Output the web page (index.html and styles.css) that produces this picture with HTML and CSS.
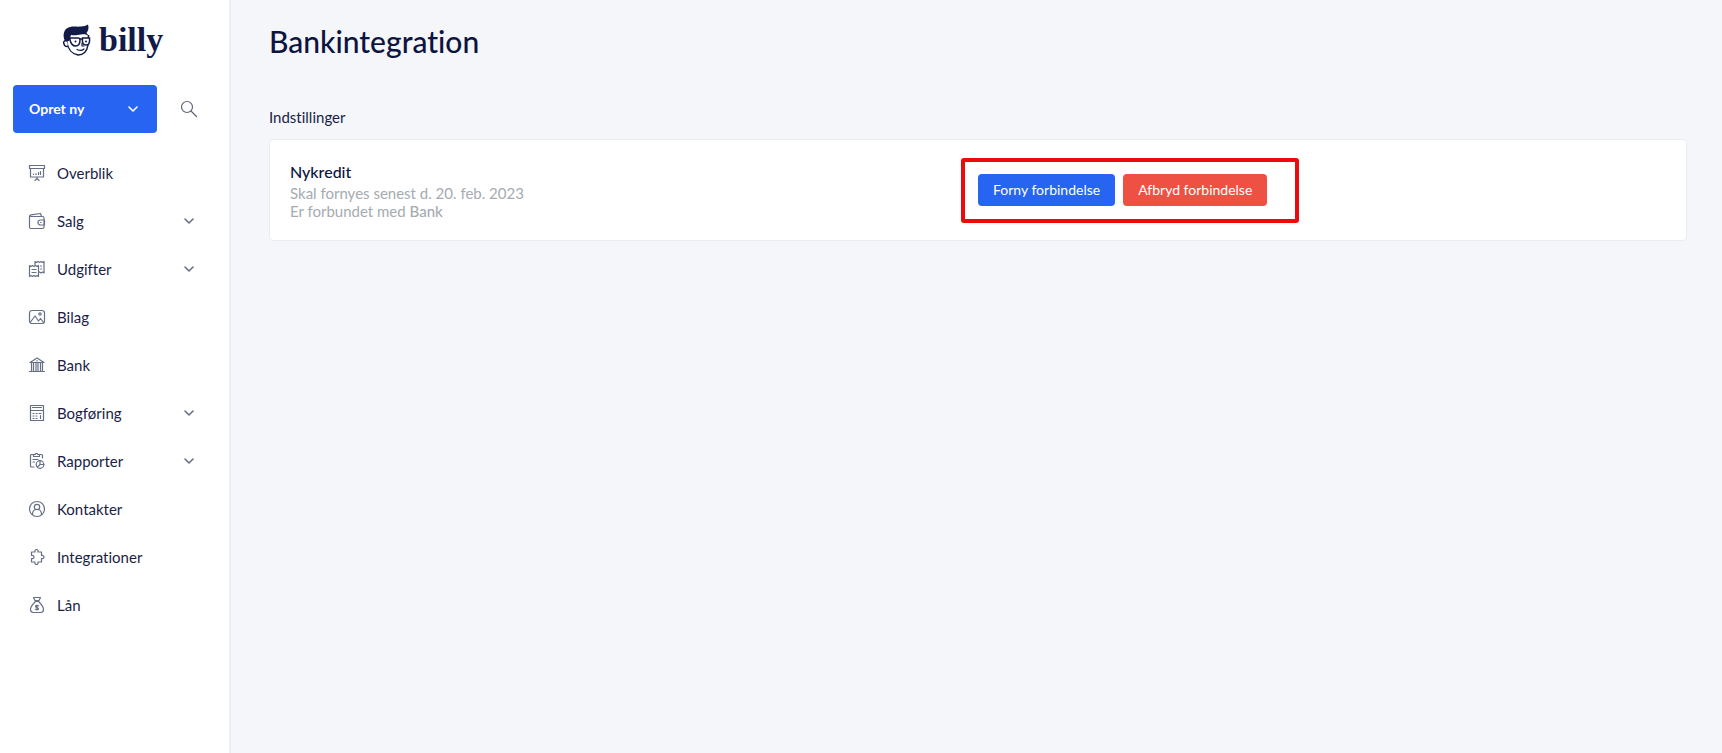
FILE: index.html
```html
<!DOCTYPE html>
<html lang="da">
<head>
<meta charset="utf-8">
<meta name="viewport" content="width=device-width, initial-scale=1">
<title>Bankintegration</title>
<link rel="stylesheet" href="styles.css">
</head>
<body>
<div class="app">
  <aside class="sidebar">
    <a class="logo" href="#" aria-label="billy">
      <svg class="logo-face" viewBox="0 0 30 34" aria-hidden="true">
        <path d="M5 15v5c1 6 5 11 11 12 6 0 9-4 10-10l.5-10" fill="#fff" stroke="currentColor" stroke-width="1.5"/>
        <path d="M5 18c-3-1-4 1-3 3 .5 2 2 3 4 2" fill="#fff" stroke="currentColor" stroke-width="1.5"/>
        <path d="M3 18C0 12 2 5 8 4c4-1 7 0 11-.5 3 0 5-1 7-2 1 3 .5 6-1.500 8.500L27 13c-3-2-5-2-8-1.500-4 .5-6 1-10 .5L7 18z" fill="currentColor"/>
        <path d="M8 15h8c1 0 2 1 2 2 0 4-1 6-4.500 6S9 21 8 17zM20.500 15h7c.5 5-.5 7-3.500 7s-4-2-3.500-7zM18 16h2.500M3 16h5" fill="#fff" stroke="currentColor" stroke-width="1.500"/>
        <circle cx="13.500" cy="18.500" r="1" fill="currentColor"/>
        <circle cx="24" cy="18.500" r="1" fill="currentColor"/>
        <path d="M20 20v3h2M15 26.500c3 1.500 5 1.500 7-.5" fill="none" stroke="currentColor" stroke-width="1.200" stroke-linecap="round"/>
      </svg>
      <span class="logo-name">billy</span>
    </a>
    <div class="tools">
      <button class="create" type="button">Opret ny
        <svg class="chevron" viewBox="0 0 12 12" aria-hidden="true"><path d="M2 4l4 4 4-4"/></svg>
      </button>
      <button class="search" type="button" aria-label="Søg">
        <svg class="icon" viewBox="0 0 18 18" aria-hidden="true"><circle cx="7" cy="7" r="5.500"/><path d="M11 11l5.500 5.500"/></svg>
      </button>
    </div>
    <nav class="nav">
      <a class="item" href="#">
        <svg class="icon" viewBox="0 0 18 18" aria-hidden="true"><path d="M1.500 1.500h15v3h-15zM2.500 4.500v8.500h13V4.500M9 13v2M7 16.500L9 14.500l2 2M5.500 10.500v-.5M8 10.500v-1M10.500 10.500v-2M12.500 10.500V7.500"/></svg>
        <span class="label">Overblik</span>
      </a>
      <a class="item" href="#">
        <svg class="icon" viewBox="0 0 18 18" aria-hidden="true"><path d="M1.500 4.500V15c0 .8.700 1.500 1.500 1.500h11.500c.8 0 1.500-.7 1.500-1.500V6c0-.8-.7-1.500-1.500-1.500zM1.500 4.500c0-1 .5-1.500 1.500-1.700L12.500 1.500l1 3M16.500 8h-4a2.500 2.500 0 0 0 0 5h4zM12.500 10.500h.5"/></svg>
        <span class="label">Salg</span>
        <svg class="chevron" viewBox="0 0 12 12" aria-hidden="true"><path d="M2 4l4 4 4-4"/></svg>
      </a>
      <a class="item" href="#">
        <svg class="icon" viewBox="0 0 18 18" aria-hidden="true"><path d="M1.500 5.500l1.500 1 1.500-1 1.500 1 1.500-1 1.500 1 1.500-1v11l-1.500-1-1.500 1-1.500-1-1.500 1-1.500-1-1.500 1zM4 9.500h4M4 12.500h4M7 5V1.500l1.500 1 1.500-1 1.500 1 1.500-1 1.500 1 1.500-1v11.500l-1.500-1-1.500 1-1.500-1M12.500 6h1M12.500 9h1"/></svg>
        <span class="label">Udgifter</span>
        <svg class="chevron" viewBox="0 0 12 12" aria-hidden="true"><path d="M2 4l4 4 4-4"/></svg>
      </a>
      <a class="item" href="#">
        <svg class="icon" viewBox="0 0 18 18" aria-hidden="true"><rect x="1.500" y="2.500" width="15" height="13" rx="2.500"/><path d="M2.500 14l4.500-6 3.500 5 2-2.500 3 4"/><circle cx="12" cy="6" r="1.200"/></svg>
        <span class="label">Bilag</span>
      </a>
      <a class="item" href="#">
        <svg class="icon" viewBox="0 0 18 18" aria-hidden="true"><path d="M2 6.500L9 2l7 4.500zM1.500 15.500h15M3.500 7v8M5.500 7v8M8 7v8M10 7v8M12.500 7v8M14.500 7v8M9 4.500v.5"/></svg>
        <span class="label">Bank</span>
      </a>
      <a class="item" href="#">
        <svg class="icon" viewBox="0 0 18 18" aria-hidden="true"><path d="M2.500 1.500h13v15h-13zM2.500 6.500h13M4.500 3.500h9M5 9.500h1M8 9.500h1M11 9.500h2M5 12h1M8 12h1M5 14.500h1M8 14.500h1M12.500 11.500v3"/></svg>
        <span class="label">Bogføring</span>
        <svg class="chevron" viewBox="0 0 12 12" aria-hidden="true"><path d="M2 4l4 4 4-4"/></svg>
      </a>
      <a class="item" href="#">
        <svg class="icon" viewBox="0 0 18 18" aria-hidden="true"><path d="M5.500 2.500h-2c-.6 0-1 .4-1 1V14c0 .6.400 1 1 1H6M11.500 2.500h2c.6 0 1 .4 1 1V6M5.500 4.500v-2h1.500l1-1h1l1 1h1.500v2zM5 7.500h5M5 10h1.500"/><circle cx="12" cy="12.500" r="3.800"/><path d="M12 8.700v3.800h3.800M12 12.500l-2.500 2.500"/></svg>
        <span class="label">Rapporter</span>
        <svg class="chevron" viewBox="0 0 12 12" aria-hidden="true"><path d="M2 4l4 4 4-4"/></svg>
      </a>
      <a class="item" href="#">
        <svg class="icon" viewBox="0 0 18 18" aria-hidden="true"><circle cx="9" cy="9" r="7.500"/><circle cx="9" cy="7" r="2.700"/><path d="M4.500 14.500c0-3 1.500-4.500 3-5M13.500 14.500c0-3-1.500-4.500-3-5"/></svg>
        <span class="label">Kontakter</span>
      </a>
      <a class="item" href="#">
        <svg class="icon" viewBox="0 0 18 18" aria-hidden="true"><path d="M3.500 4H7c-.5-1.500.5-2.500 1.500-2.500S10.500 2.500 10 4h3.500v3.500c1.500-.5 2.500.5 2.500 1.500s-1 2-2.500 1.500V14H10c.5 1.500-.5 2.500-1.500 2.500S6.500 15.500 7 14H3.500v-3.500c2 .5 2.500-.5 2.500-1.500S5 7 3.500 7.500z"/></svg>
        <span class="label">Integrationer</span>
      </a>
      <a class="item" href="#">
        <svg class="icon" viewBox="0 0 18 18" aria-hidden="true"><path d="M5.500 1.500h7l-1.500 3H7zM7 5.500h4M7 6C5 8 2.500 11 2.500 13.500c0 2 1 3 3 3h7c2 0 3-1 3-3C15.500 11 13 8 11 6M10.500 9.800c-1-1-3-.5-3 .6 0 1.500 3 .8 3 2.300 0 1.200-2 1.500-3 .4M9 9v5"/></svg>
        <span class="label">Lån</span>
      </a>
    </nav>
  </aside>
  <main class="main">
    <h1 class="title">Bankintegration</h1>
    <h2 class="section">Indstillinger</h2>
    <section class="card">
      <div class="bank">
        <h3 class="bank-name">Nykredit</h3>
        <p class="meta">Skal fornyes senest d. 20. feb. 2023</p>
        <p class="meta">Er forbundet med <b>Bank</b></p>
      </div>
      <div class="actions">
        <button class="button renew" type="button">Forny forbindelse</button>
        <button class="button cancel" type="button">Afbryd forbindelse</button>
        <div class="highlight"></div>
      </div>
    </section>
  </main>
</div>
</body>
</html>
```
FILE: styles.css
```css
* { box-sizing: border-box; }

body {
  margin: 0;
  font-family: Lato, "Open Sans", sans-serif;
  font-size: 15px;
  line-height: 18px;
  font-variant-ligatures: none;
  color: #1b1e45;
  background: #f4f6fa;
}

h1, h2, h3, p { margin: 0; font-weight: 400; }
button { font: inherit; border: 0; cursor: pointer; }
a { color: inherit; text-decoration: none; }

.app { display: flex; min-height: 100vh; }

.sidebar {
  flex: 0 0 231px;
  padding: 20px 13px 0;
  background: #fff;
  border-right: 2px solid #edeff5;
}

.logo {
  display: flex;
  align-items: center;
  gap: 7px;
  height: 40px;
  padding-left: 49px;
  color: #111a48;
}
.logo-face { width: 30px; height: 34px; }
.logo-name {
  font: 700 34px/40px "Liberation Serif", serif;
}

.tools { display: flex; align-items: center; gap: 16px; margin-top: 25px; }
.create {
  display: flex;
  align-items: center;
  justify-content: space-between;
  width: 144px;
  height: 48px;
  padding: 0 18px 0 16px;
  border-radius: 4px;
  background: #2764f1;
  color: #fff;
  font-size: 14px;
  font-weight: 700;
}
.search {
  display: flex;
  padding: 7px;
  background: none;
  color: #5f6678;
}

.icon, .chevron {
  flex: none;
  fill: none;
  stroke: currentColor;
  stroke-linecap: round;
  stroke-linejoin: round;
}
.icon { width: 18px; height: 18px; stroke-width: 1.2; }
.chevron { width: 12px; height: 12px; stroke-width: 1.6; }

.nav { margin-top: 16px; }
.item {
  display: flex;
  align-items: center;
  gap: 11px;
  height: 48px;
  padding: 0 21px 0 15px;
}
.item .icon, .item .chevron { color: #667085; }
.label { flex: 1; padding-bottom: 1px; }

.main { flex: 1; min-width: 0; padding: 23px 35px 0 38px; }
.title { font-size: 30px; line-height: 36px; font-weight: 500; color: #0d1440; }
.section { margin-top: 49px; font-size: 15px; line-height: 18px; }

.card {
  display: grid;
  grid-template-columns: 1fr 1fr;
  align-items: center;
  margin-top: 13px;
  padding: 20px;
  background: #fff;
  border: 1px solid #e9ecf3;
  border-radius: 4px;
}
.bank-name { font-size: 16px; line-height: 24px; font-weight: 500; color: #0d1440; }
.meta { color: #a5abb1; }
.meta b { font-weight: 500; }

.actions { position: relative; display: flex; gap: 8px; justify-self: start; }
.button {
  height: 32px;
  padding: 0 15px;
  border-radius: 4px;
  color: #fff;
  font-size: 14px;
}
.renew { background: #2764f1; }
.cancel { background: #ee5144; }
.highlight {
  position: absolute;
  inset: -16px -32px -17px -17px;
  border: 4px solid #ec0a0e;
  border-radius: 3px;
  pointer-events: none;
}
```
